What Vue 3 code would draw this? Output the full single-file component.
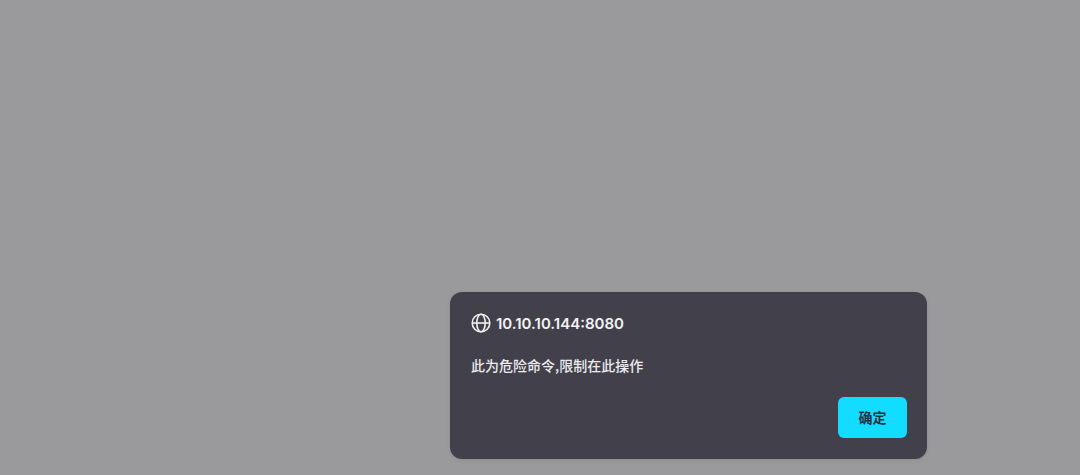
<script setup>
const host = '10.10.10.144:8080'
const message = '此为危险命令,限制在此操作'
</script>

<template>
  <div class="overlay">
    <div class="dialog">
      <div class="head">
        <svg class="globe" viewBox="0 0 20 20" fill="none" stroke="currentColor" stroke-width="1.6">
          <circle cx="10" cy="10" r="8.8" />
          <ellipse cx="10" cy="10" rx="4.2" ry="8.8" />
          <path d="M1.2 10h17.6" />
        </svg>
        <span class="host">{{ host }}</span>
      </div>
      <p class="msg">{{ message }}</p>
      <div class="actions">
        <button class="ok">确定</button>
      </div>
    </div>
  </div>
</template>

<style>
html, body { margin: 0; background: #9a9a9c; }
</style>

<style scoped>
.overlay {
  width: 1080px;
  height: 475px;
  box-sizing: border-box;
  padding: 292px 0 0 450px;
  background: #9a9a9c;
  overflow: hidden;
}
.dialog {
  width: 477px;
  height: 167px;
  box-sizing: border-box;
  padding: 21px 20px 21px 21px;
  background: #42404b;
  border-radius: 12px;
  box-shadow: 0 1px 4px rgba(0, 0, 0, 0.08);
  display: flex;
  flex-direction: column;
  font-family: "Inter", "Noto Sans CJK SC", sans-serif;
  color: #f2f2f3;
}
.head {
  display: flex;
  align-items: center;
  gap: 5px;
  height: 20px;
}
.globe { width: 20px; height: 20px; color: #f0f0f2; flex: none; }
.host { font-size: 15px; font-weight: 600; }
.msg {
  margin: 22px 0 0;
  font-size: 14px;
  line-height: 20px;
  font-weight: 500;
  color: #ececee;
  font-family: "Noto Sans CJK SC", sans-serif;
}
.actions { margin-top: auto; display: flex; justify-content: flex-end; }
.ok {
  width: 69px;
  height: 41px;
  border: 0;
  padding: 0 0 1px;
  border-radius: 6px;
  background: #12dcff;
  color: #23323e;
  font-family: "Noto Sans CJK SC", sans-serif;
  font-size: 14px;
  font-weight: 700;
}
</style>
